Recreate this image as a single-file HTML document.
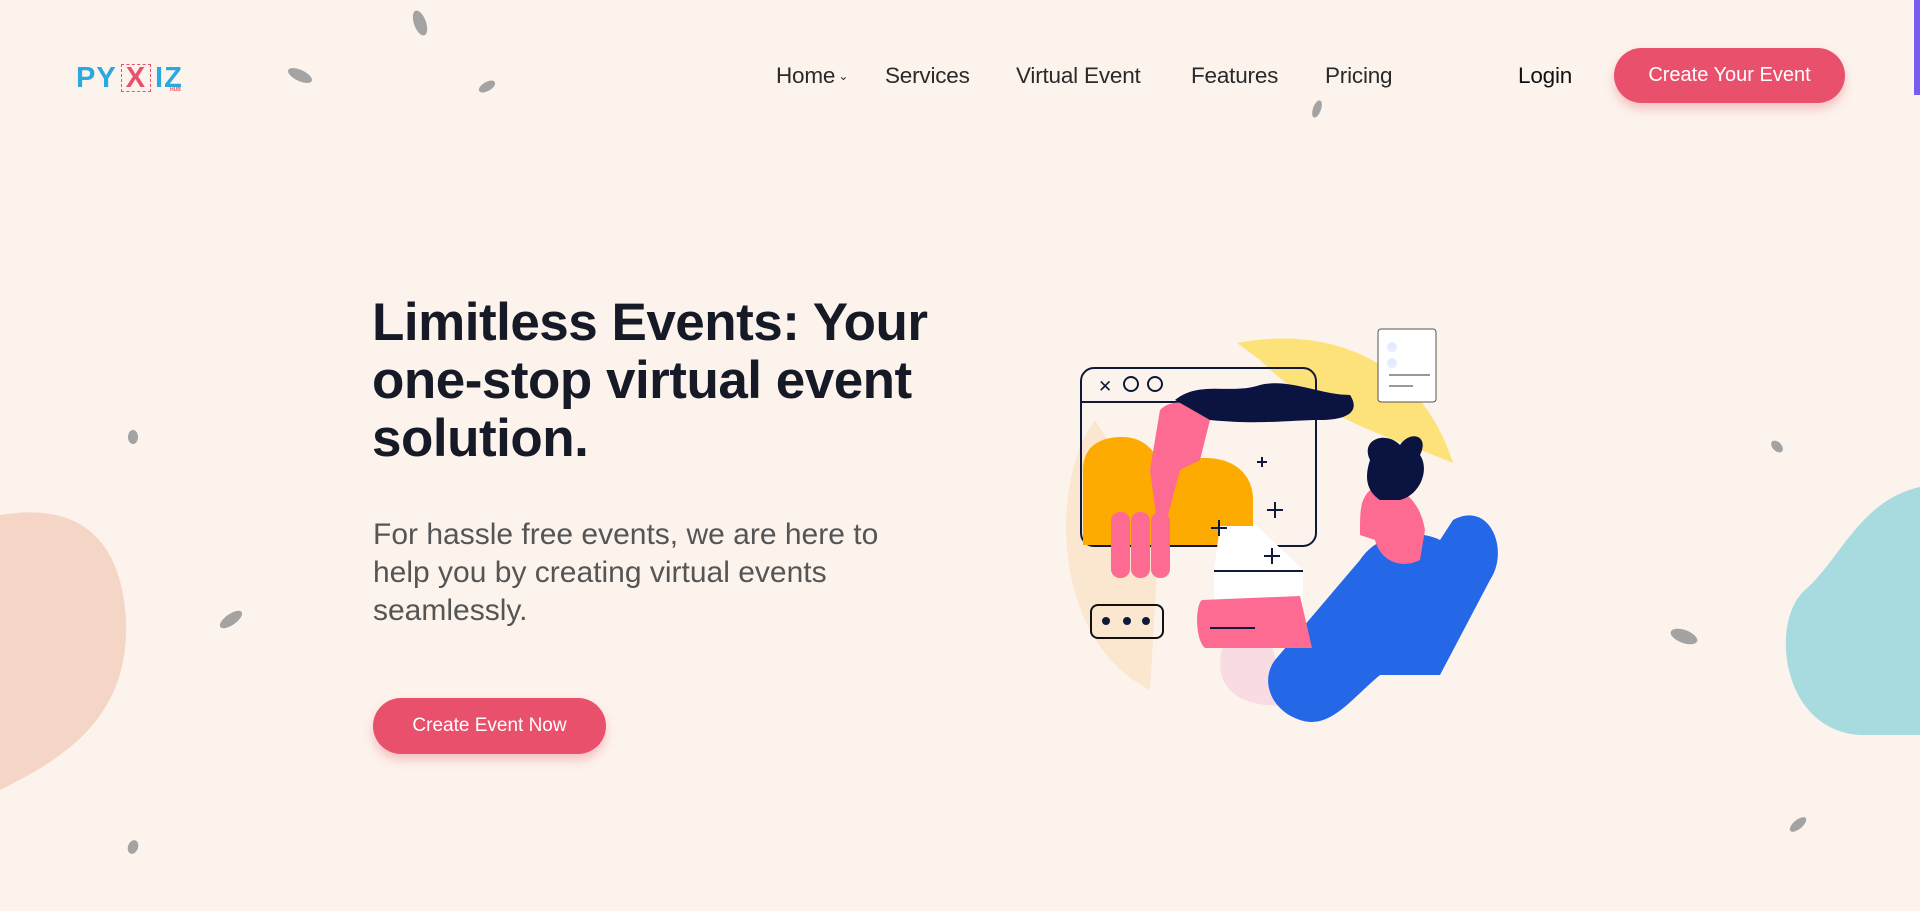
<!DOCTYPE html>
<html><head><meta charset="utf-8"><style>
*{margin:0;padding:0;box-sizing:border-box}
body{width:1920px;height:911px;overflow:hidden;background:#fcf3ec;font-family:"Liberation Sans",sans-serif;position:relative;color:#141a2b}
.nav a{position:absolute;top:63px;font-size:22.5px;color:#2a2a2a;text-decoration:none;letter-spacing:-0.2px}
.btn{position:absolute;background:#e9506b;color:#fff;border-radius:30px;display:flex;align-items:center;justify-content:center;box-shadow:0 6px 10px rgba(233,80,107,0.3)}
h1{position:absolute;left:372px;top:294px;font-size:53px;line-height:58px;font-weight:700;letter-spacing:-0.5px;color:#151a26}
p{position:absolute;left:373px;top:516px;font-size:30px;line-height:38px;color:#555;width:560px}
.leaf{position:absolute;background:#a3a3a3;border-radius:50%}
</style></head><body>
<div style="position:absolute;left:1914px;top:0;width:6px;height:95px;background:#7b5cf0"></div>
<div style="position:absolute;left:76px;top:62px;font-size:29px;font-weight:700;color:#2aa8e0;letter-spacing:1px">PY<span style="display:inline-block;border:1px dashed #e9506b;color:#e9506b;padding:0 4px;margin:0 4px;line-height:26px">X</span>IZ</div>
<div style="position:absolute;left:170px;top:87px;font-size:5px;color:#e9506b;font-weight:700">HUB</div>
<div class="nav">
<a style="left:776px">Home<span style="font-size:12px;vertical-align:3px"> ⌄</span></a>
<a style="left:885px">Services</a>
<a style="left:1016px">Virtual Event</a>
<a style="left:1191px">Features</a>
<a style="left:1325px">Pricing</a>
<a style="left:1518px;color:#111">Login</a>
</div>
<div class="btn" style="left:1614px;top:48px;width:231px;height:55px;font-size:20px">Create Your Event</div>
<h1>Limitless Events: Your<br>one-stop virtual event<br>solution.</h1>
<p>For hassle free events, we are here to help you by creating virtual events seamlessly.</p>
<div class="btn" style="left:373px;top:698px;width:233px;height:56px;font-size:19px">Create Event Now</div>
<svg style="position:absolute;left:0;top:0" width="1920" height="911">
<path d="M0 515 C60 505 120 520 126 620 C130 720 60 760 0 790Z" fill="#f5d5c6"/>
<path d="M1920 487 C1860 500 1840 560 1805 590 C1770 620 1780 730 1860 735 L1920 735Z" fill="#a8dbe0"/>
<path d="M1237 343 C1330 325 1420 360 1453 463 C1400 440 1320 420 1260 360Z" fill="#fde27a"/>
<path d="M1095 420 C1050 480 1050 640 1150 690 L1160 520Z" fill="#fbe6d0"/>
<path d="M1225 640 C1210 680 1230 710 1290 705 L1270 640Z" fill="#f9dbe3"/>
<rect x="1081" y="368" width="235" height="178" rx="13" fill="none" stroke="#0f1a3a" stroke-width="2"/>
<line x1="1081" y1="402" x2="1316" y2="402" stroke="#0f1a3a" stroke-width="2"/>
<text x="1098" y="392" font-size="17" fill="#0f1a3a">✕</text>
<circle cx="1131" cy="384" r="7" fill="none" stroke="#0f1a3a" stroke-width="2"/>
<circle cx="1155" cy="384" r="7" fill="none" stroke="#0f1a3a" stroke-width="2"/>
<path d="M1083 545 L1083 470 C1083 440 1110 437 1122 437 C1150 437 1162 460 1162 480 L1162 545Z" fill="#fdab00"/>
<path d="M1162 545 L1162 490 C1162 465 1180 458 1205 458 C1235 458 1253 475 1253 500 L1253 545Z" fill="#fdab00"/>
<path d="M1160 410 C1175 395 1200 405 1210 420 L1200 460 L1180 470 L1160 545 L1150 470 L1155 440Z" fill="#fd6b93"/>
<path d="M1175 400 C1200 380 1230 395 1260 385 C1290 378 1320 395 1350 395 C1360 410 1350 420 1320 420 C1290 420 1260 425 1210 420Z" fill="#0b1440"/>
<rect x="1111" y="512" width="19" height="66" rx="9" fill="#fd6b93"/><rect x="1131" y="512" width="19" height="66" rx="9" fill="#fd6b93"/><rect x="1151" y="512" width="19" height="66" rx="9" fill="#fd6b93"/>
<path d="M1220 526 L1257 526 L1303 570 L1303 648 L1214 648 L1214 570Z" fill="#fff"/>
<line x1="1214" y1="571" x2="1303" y2="571" stroke="#0f1a3a" stroke-width="2"/>
<path d="M1453 520 C1490 500 1510 550 1490 580 L1440 675 L1380 675 C1350 700 1330 730 1300 720 C1270 710 1260 680 1275 660 L1360 560 C1380 530 1420 530 1440 540Z" fill="#2468e8"/>
<path d="M1370 490 C1400 480 1420 500 1425 530 L1420 560 C1400 570 1380 560 1375 540 L1360 535 C1360 510 1360 500 1370 490Z" fill="#fd6b93"/>
<path d="M1370 460 C1360 440 1385 430 1400 445 C1410 430 1430 435 1420 455 C1430 470 1420 495 1400 500 L1380 500 C1365 490 1365 475 1370 460Z" fill="#0b1440"/>
<path d="M1202 600 L1300 596 L1312 648 L1205 648 C1195 640 1195 605 1202 600Z" fill="#fd6b93"/>
<line x1="1210" y1="628" x2="1255" y2="628" stroke="#0f1a3a" stroke-width="2"/>
<rect x="1378" y="329" width="58" height="73" rx="3" fill="#fff" stroke="#555" stroke-width="1"/>
<circle cx="1392" cy="347" r="5" fill="#e5ecff"/><circle cx="1392" cy="363" r="5" fill="#e5ecff"/>
<line x1="1389" y1="375" x2="1430" y2="375" stroke="#333"/><line x1="1389" y1="386" x2="1413" y2="386" stroke="#333"/>
<rect x="1091" y="605" width="72" height="33" rx="7" fill="none" stroke="#111" stroke-width="2"/>
<circle cx="1106" cy="621" r="4" fill="#0f1a3a"/><circle cx="1127" cy="621" r="4" fill="#0f1a3a"/><circle cx="1146" cy="621" r="4" fill="#0f1a3a"/>
<g stroke="#0f1a3a" stroke-width="2"><path d="M1262 457v10M1257 462h10M1275 502v16M1267 510h16M1219 520v16M1211 528h16M1272 548v16M1264 556h16"/></g>
</svg>
<div class="leaf" style="left:414px;top:10px;width:12px;height:26px;transform:rotate(-20deg)"></div>
<div class="leaf" style="left:287px;top:70px;width:26px;height:11px;transform:rotate(25deg)"></div>
<div class="leaf" style="left:478px;top:82px;width:18px;height:9px;transform:rotate(-30deg)"></div>
<div class="leaf" style="left:1313px;top:100px;width:8px;height:18px;transform:rotate(20deg)"></div>
<div class="leaf" style="left:128px;top:430px;width:10px;height:14px"></div>
<div class="leaf" style="left:218px;top:614px;width:26px;height:11px;transform:rotate(-35deg)"></div>
<div class="leaf" style="left:128px;top:840px;width:10px;height:14px;transform:rotate(20deg)"></div>
<div class="leaf" style="left:1770px;top:442px;width:14px;height:9px;transform:rotate(45deg)"></div>
<div class="leaf" style="left:1670px;top:630px;width:28px;height:13px;transform:rotate(20deg)"></div>
<div class="leaf" style="left:1788px;top:820px;width:20px;height:9px;transform:rotate(-40deg)"></div>
</body></html>
